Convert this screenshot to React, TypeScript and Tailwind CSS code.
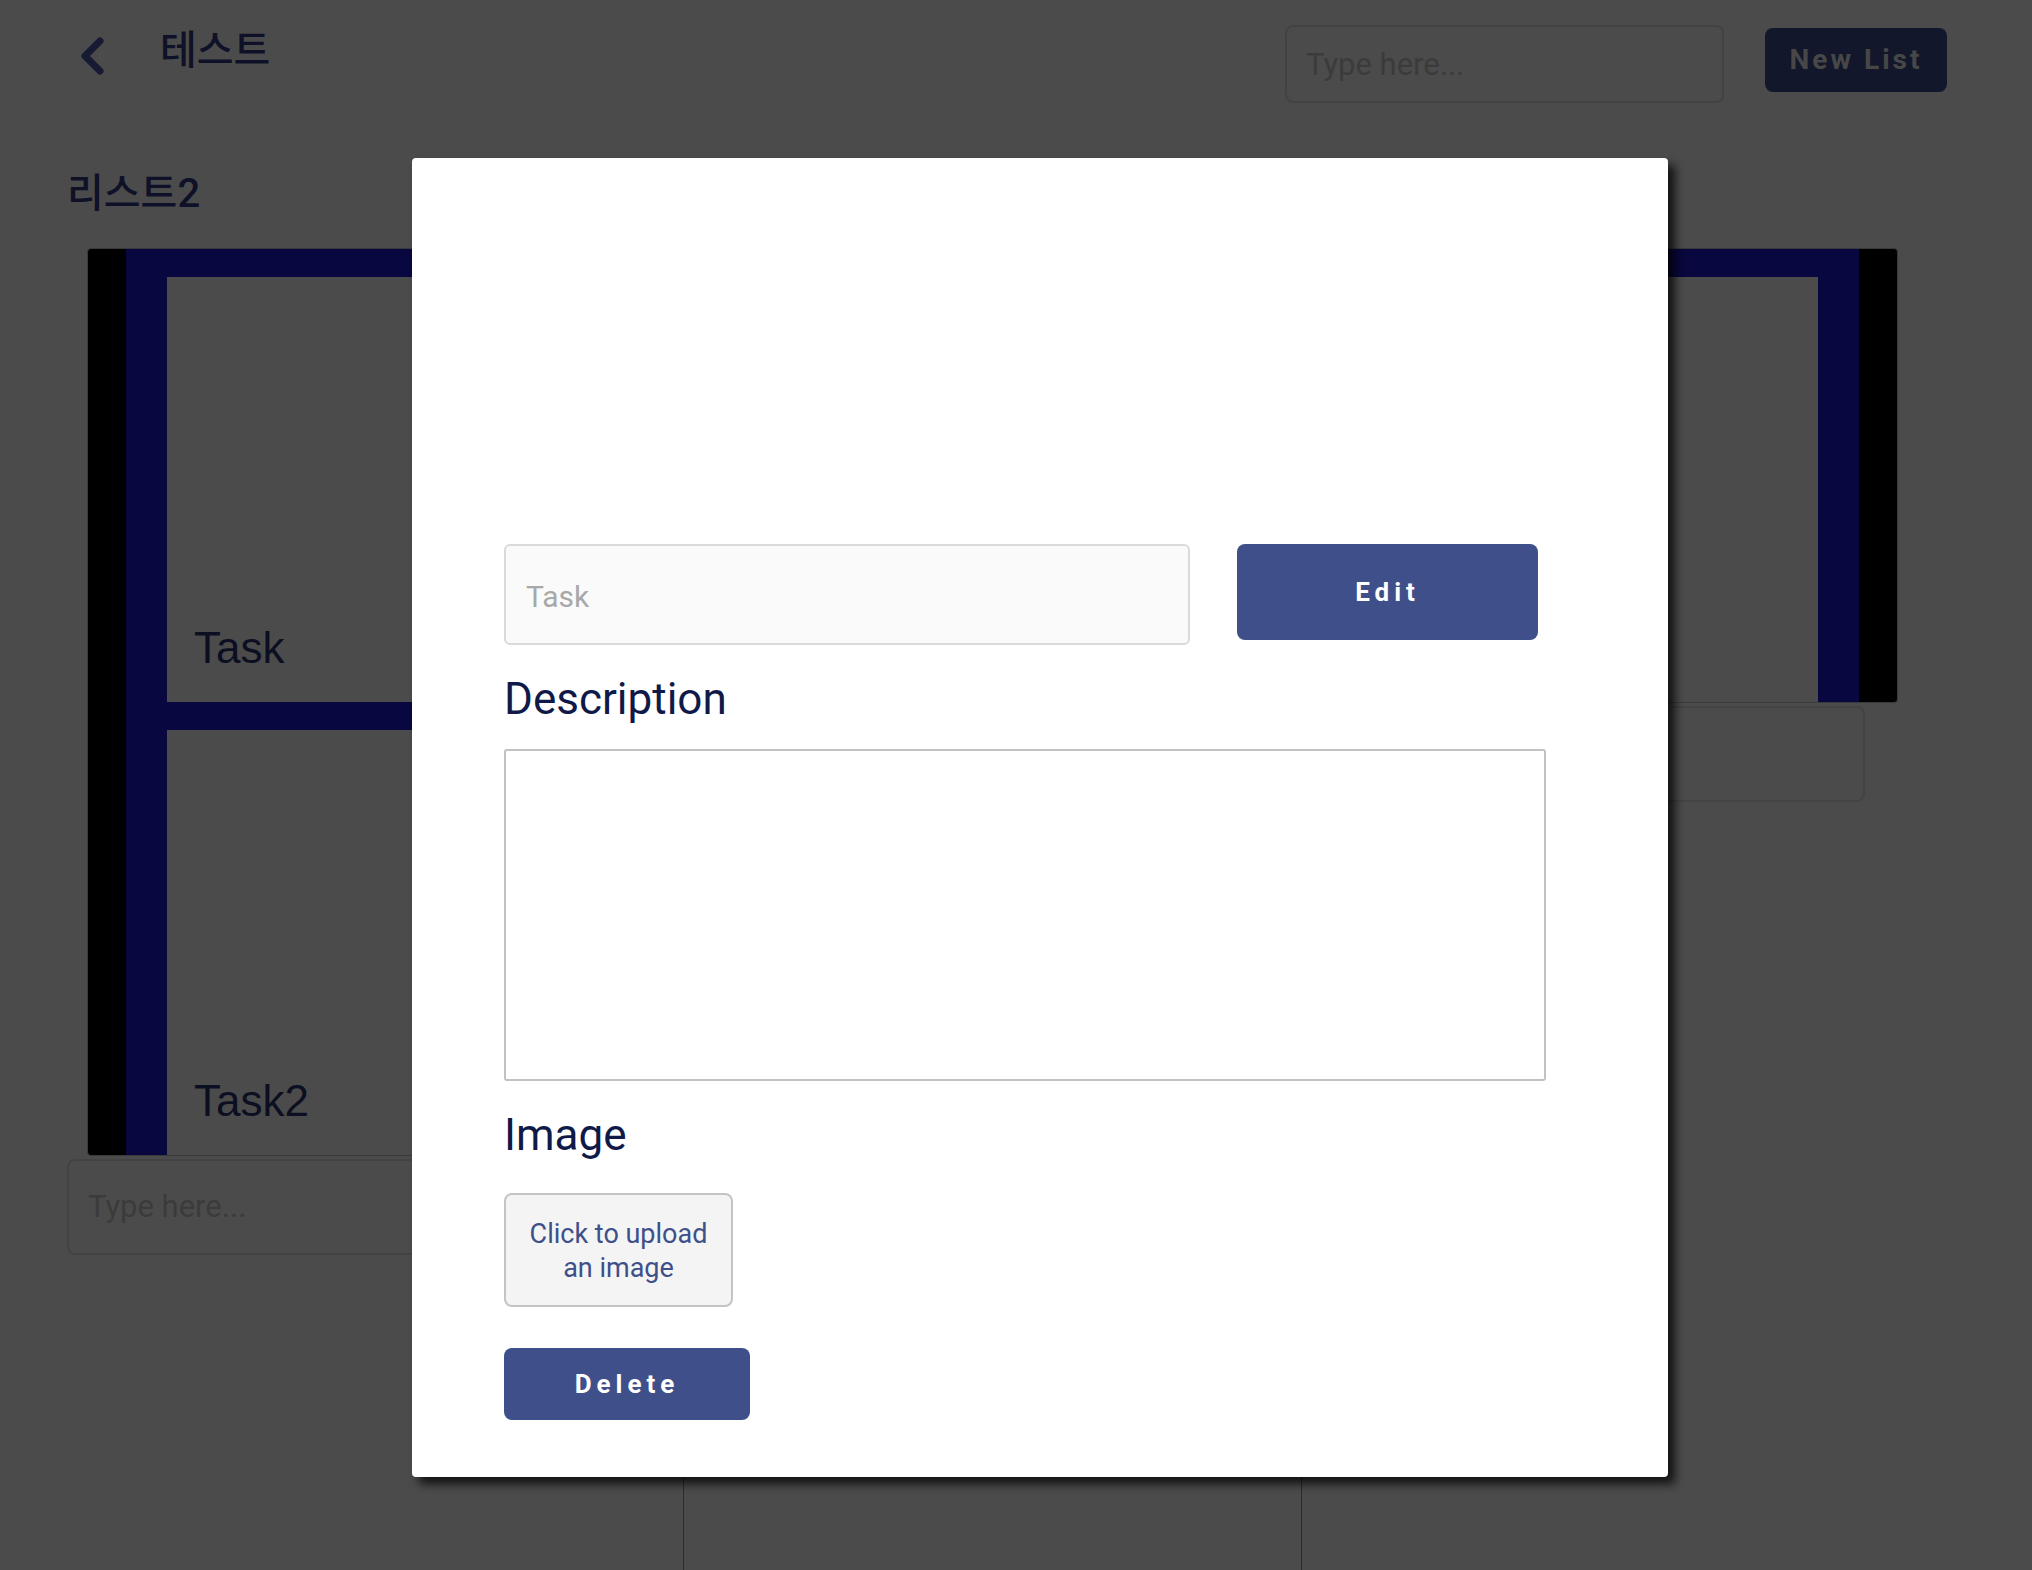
import { useState } from 'react';

interface Task {
  id: string;
  title: string;
}

interface List {
  id: string;
  name: string;
  tasks: Task[];
}

const lists: List[] = [
  {
    id: 'l2',
    name: '리스트2',
    tasks: [
      { id: 't1', title: 'Task' },
      { id: 't2', title: 'Task2' },
    ],
  },
  {
    id: 'l3',
    name: '리스트3',
    tasks: [{ id: 't3', title: 'Task3' }],
  },
];

const font = { fontFamily: 'Roboto, "Noto Sans CJK KR", sans-serif' };

function BackIcon() {
  return (
    <svg width="26" height="38" viewBox="0 0 26 38" fill="none">
      <path
        d="M21 4 L6 19 L21 34"
        stroke="#171a32"
        strokeWidth="7"
        strokeLinecap="round"
        strokeLinejoin="round"
      />
    </svg>
  );
}

function TaskList({ list }: { list: List }) {
  return (
    <div className="w-[783px] shrink-0">
      <h2 className="text-[40px] font-medium leading-none text-[#0e1128]">{list.name}</h2>
      <div className="mt-[34px] ml-[20px] w-[796px] rounded-[4px] border border-[#3a3a3a] bg-black px-[38px]">
        {list.tasks.map((task) => (
          <div
            key={task.id}
            className="flex h-[453px] items-end border-x-[41px] border-t-[28px] border-[#09073f] bg-[#4b4b4b] pb-[32px] pl-[27px]"
          >
            <span className="font-['Liberation_Sans',Arial,sans-serif] text-[44px] leading-none text-[#0c0f22]">
              {task.title}
            </span>
          </div>
        ))}
      </div>
      <div className="mt-[3px] flex h-[96px] items-center rounded-[8px] border-2 border-[#434343] pl-[19px] text-[31px] text-[#3b3b3b]">
        Type here...
      </div>
    </div>
  );
}

function TaskModal() {
  const [description, setDescription] = useState('');

  return (
    <div className="absolute left-[412px] top-[158px] h-[1319px] w-[1256px] rounded-[4px] bg-white pl-[92px] pt-[386px] shadow-[7px_7px_10px_rgba(0,0,0,0.75)]">
      <div className="flex items-start">
        <div className="flex h-[101px] w-[686px] items-center rounded-[6px] border-2 border-[#dadada] bg-[#fafafa] pl-[20px] pt-[3px] text-[30px] text-[#a8a8a8]">
          Task
        </div>
        <button className="ml-[47px] h-[96px] w-[301px] rounded-[8px] bg-[#3f4f8a] text-[26px] font-bold tracking-[5px] text-white">
          Edit
        </button>
      </div>

      <h3 className="mt-[32px] text-[44px] leading-none text-[#0f1a48]">Description</h3>
      <textarea
        value={description}
        onChange={(e) => setDescription(e.target.value)}
        className="mt-[28px] block h-[332px] w-[1042px] resize-none rounded-[3px] border-2 border-[#c2c2c2] outline-none"
      />

      <h3 className="mt-[32px] text-[44px] leading-none text-[#0f1a48]">Image</h3>
      <div className="mt-[36px] flex h-[114px] w-[229px] items-center justify-center rounded-[8px] border-2 border-[#c4c4c4] bg-[#f4f4f4] pt-[2px] text-center text-[27px] leading-[34px] text-[#3f4f8a]">
        Click to upload
        <br />
        an image
      </div>

      <button className="mt-[41px] block h-[72px] w-[246px] rounded-[8px] bg-[#3f4f8a] text-[26px] font-bold tracking-[5px] text-white">
        Delete
      </button>
    </div>
  );
}

export default function App() {
  return (
    <div className="relative h-[1570px] overflow-hidden bg-[#4b4b4b]" style={font}>
      <header className="flex items-start justify-between pl-[79px] pr-[85px] pt-[25px]">
        <div className="mt-[12px] flex items-start">
          <BackIcon />
          <h1 className="-mt-[6px] ml-[55px] text-[40px] font-medium leading-none text-[#0e1128]">테스트</h1>
        </div>
        <div className="flex items-start">
          <div className="flex h-[78px] w-[439px] items-center rounded-[8px] border-2 border-[#424242] pl-[19px] pt-[2px] text-[31px] text-[#3b3b3b]">
            Type here...
          </div>
          <button className="ml-[41px] mt-[3px] h-[64px] w-[182px] rounded-[8px] bg-[#13172b] text-[28px] font-bold tracking-[3px] text-[#474747]">
            New List
          </button>
        </div>
      </header>

      <main className="pl-[67px] pt-[71px]">
        <div className="flex items-start gap-[232px]">
          {lists.map((list) => (
            <TaskList key={list.id} list={list} />
          ))}
        </div>
        <div className="ml-[616px] mt-[60px] h-[400px] w-[619px] border-x border-[#2b2b2b]" />
      </main>

      <TaskModal />
    </div>
  );
}
